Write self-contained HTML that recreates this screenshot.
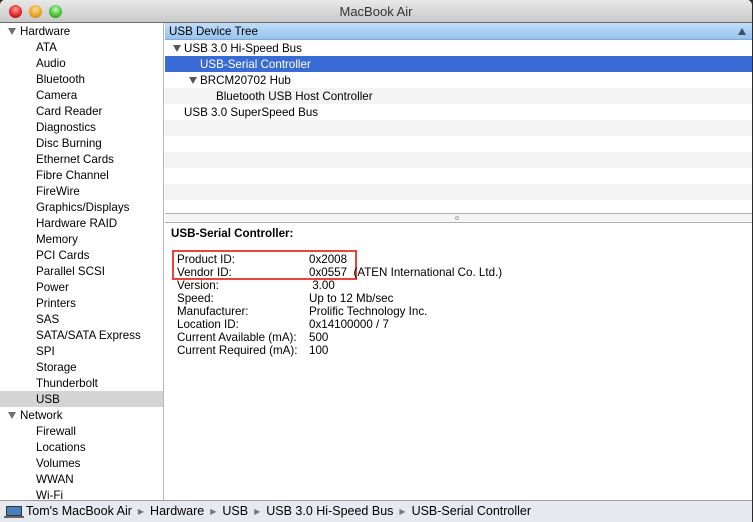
<!DOCTYPE html>
<html><head><style>
*{margin:0;padding:0;box-sizing:border-box}
body{width:753px;height:522px;background:#2a2a2a;font-family:"Liberation Sans",sans-serif;font-size:11.6px;color:#000;position:relative;overflow:hidden}
.win{position:absolute;left:0;top:0;width:752px;height:522px;background:#fff;border-radius:5px 5px 0 0;overflow:hidden}
.title{position:absolute;left:0;top:0;width:752px;height:23px;background:linear-gradient(#e8e8e8,#c9c9c9);border-bottom:1px solid #6e6e6e;text-align:center;font-size:13px;line-height:23px;color:#333}
.dot{position:absolute;top:5px;width:13px;height:13px;border-radius:50%}
.side{position:absolute;left:0;top:23px;width:164px;height:477px;background:#fff;border-right:1px solid #b5b5b5}
.side div{height:16px;line-height:17px;padding-left:36px;white-space:nowrap}
.side div.h{padding-left:20px;position:relative}
.side div.h:before{content:"";position:absolute;left:8px;top:5px;border-left:4px solid transparent;border-right:4px solid transparent;border-top:7px solid #707070}
.side div.sel{background:#d4d4d4}
.tree{position:absolute;left:165px;top:23px;width:587px;height:190px}
.th{height:17px;line-height:17px;background:linear-gradient(#c3ddf7,#94c4f1);border-bottom:1px solid #86a9cf;padding-left:4px;position:relative}
.tr{height:16px;line-height:17px;white-space:nowrap;position:relative}
.tr.sel{background:#3a6bd4;color:#fff}
.tri{position:absolute;top:5px;border-left:4px solid transparent;border-right:4px solid transparent;border-top:7px solid #555}
.split{position:absolute;left:165px;top:213px;width:587px;height:10px;background:#f5f5f5;border-top:1px solid #b0b0b0;border-bottom:1px solid #b0b0b0}
.det{position:absolute;left:165px;top:224px;width:587px;height:276px}
.row{position:absolute;left:12px;height:13px;line-height:13px;white-space:nowrap}
.row span{position:absolute;left:132px}
.path{position:absolute;left:0;top:500px;width:752px;height:22px;background:#e6e9ef;border-top:1px solid #9a9a9a;line-height:20px;font-size:12.5px;padding-left:26px;white-space:nowrap}
.ar{color:#777;font-size:8px;margin:0 6px;vertical-align:1px}
</style></head><body>
<div class="win">
<div class="title">MacBook Air
<div class="dot" style="left:9px;background:radial-gradient(circle at 50% 35%,#f99,#d22 60%,#900)"></div>
<div class="dot" style="left:29px;background:radial-gradient(circle at 50% 35%,#fd9,#e9a020 60%,#a60)"></div>
<div class="dot" style="left:49px;background:radial-gradient(circle at 50% 35%,#bfb,#4b3 60%,#270)"></div>
</div>
<div class="side">
<div class="h">Hardware</div><div>ATA</div><div>Audio</div><div>Bluetooth</div><div>Camera</div><div>Card Reader</div><div>Diagnostics</div><div>Disc Burning</div><div>Ethernet Cards</div><div>Fibre Channel</div><div>FireWire</div><div>Graphics/Displays</div><div>Hardware RAID</div><div>Memory</div><div>PCI Cards</div><div>Parallel SCSI</div><div>Power</div><div>Printers</div><div>SAS</div><div>SATA/SATA Express</div><div>SPI</div><div>Storage</div><div>Thunderbolt</div><div class="sel">USB</div><div class="h">Network</div><div>Firewall</div><div>Locations</div><div>Volumes</div><div>WWAN</div><div>Wi-Fi</div>
</div>
<div class="tree">
<div class="th">USB Device Tree<span style="position:absolute;right:6px;top:5px;border-left:4px solid transparent;border-right:4px solid transparent;border-bottom:7px solid #3b4f66"></span></div>
<div>
<div class="tr" style="background:#fff;padding-left:19px"><i class="tri" style="left:8px"></i>USB 3.0 Hi-Speed Bus</div>
<div class="tr sel" style="padding-left:35px">USB-Serial Controller</div>
<div class="tr" style="background:#fff;padding-left:35px"><i class="tri" style="left:24px"></i>BRCM20702 Hub</div>
<div class="tr" style="background:#f3f3f3;padding-left:51px">Bluetooth USB Host Controller</div>
<div class="tr" style="background:#fff;padding-left:19px">USB 3.0 SuperSpeed Bus</div>
<div class="tr" style="background:#f3f3f3"></div>
<div class="tr" style="background:#fff"></div>
<div class="tr" style="background:#f3f3f3"></div>
<div class="tr" style="background:#fff"></div>
<div class="tr" style="background:#f3f3f3"></div>
<div class="tr" style="background:#fff;height:13px"></div>
</div>
</div>
<div class="split"><div style="position:absolute;left:290px;top:2px;width:4px;height:4px;border:1px solid #aaa;border-radius:50%"></div></div>
<div class="det">
<div class="row" style="left:6px;top:3px;font-weight:bold">USB-Serial Controller:</div>
<div style="position:absolute;left:7px;top:26px;width:185px;height:30px;border:2px solid #e8463c"></div>
<div class="row" style="top:29px">Product ID:<span>0x2008</span></div>
<div class="row" style="top:42px">Vendor ID:<span>0x0557 &nbsp;(ATEN International Co. Ltd.)</span></div>
<div class="row" style="top:55px">Version:<span>&nbsp;3.00</span></div>
<div class="row" style="top:68px">Speed:<span>Up to 12 Mb/sec</span></div>
<div class="row" style="top:81px">Manufacturer:<span>Prolific Technology Inc.</span></div>
<div class="row" style="top:94px">Location ID:<span>0x14100000 / 7</span></div>
<div class="row" style="top:107px">Current Available (mA):<span>500</span></div>
<div class="row" style="top:120px">Current Required (mA):<span>100</span></div>
</div>
<div class="path"><span style="position:absolute;left:6px;top:5px;width:16px;height:10px;background:#4a7fc0;border:1px solid #333"></span><span style="position:absolute;left:4px;top:15px;width:20px;height:2px;background:#666"></span>Tom's MacBook Air<span class="ar">▶</span>Hardware<span class="ar">▶</span>USB<span class="ar">▶</span>USB 3.0 Hi-Speed Bus<span class="ar">▶</span>USB-Serial Controller</div>
</div>
</body></html>
